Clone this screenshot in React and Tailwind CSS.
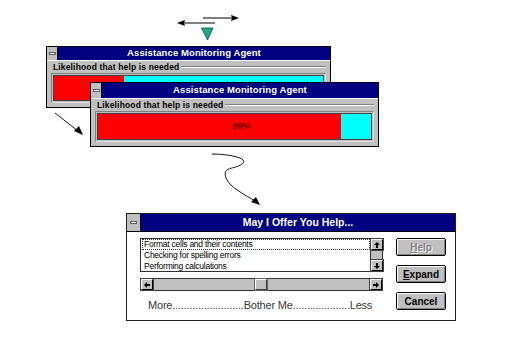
import React from "react";

const F = { fontFamily: '"Liberation Sans", Arial, sans-serif' };

function SysBox({ w = 11 }) {
  return (
    <div className={`h-full bg-[#c0c0c0] border-r border-black flex items-center justify-center shrink-0`} style={{ width: w }}>
      <div className="w-[7px] h-[3px] bg-white border border-[#606060]" />
    </div>
  );
}

function AgentWindow({ className, pct, label, titleH }) {
  return (
    <div className={`absolute border border-black bg-[#c0c0c0] flex flex-col ${className}`}>
      <div className="flex shrink-0" style={{ height: titleH }}>
        <SysBox />
        <div className="flex-1 bg-[#000080] text-white font-bold text-[9.5px] flex items-center justify-center tracking-[0.1px]">
          Assistance Monitoring Agent
        </div>
      </div>
      <div className="flex-1 flex flex-col border-t border-white px-[4px] pb-[4px]">
        <div className="flex items-center h-[10px] mt-[1px]">
          <span className="text-[8.5px] font-bold text-black leading-none pl-[2px] pr-[2px] tracking-[0.15px]">Likelihood that help is needed</span>
          <div className="flex-1 border-t border-[#808080] border-b border-b-white h-[2px]" />
        </div>
        <div className="flex-1 border border-[#e0e0e0] border-t-[#808080] border-l-[#808080] p-[1px] mt-[1px]">
          <div className="h-full flex border border-[#404040] relative">
            <div className="bg-[#ff0000] h-full" style={{ width: pct + "%" }} />
            <div className="bg-[#00ffff] h-full flex-1" />
            {label && (
              <div className="absolute inset-0 flex items-center justify-center text-[9px] font-bold text-[#700000] pl-[14px]">
                {label}
              </div>
            )}
          </div>
        </div>
      </div>
    </div>
  );
}

function ArrowBox({ dir, className = "" }) {
  return (
    <div className={`w-[12px] h-[11px] bg-[#c0c0c0] border border-black border-t-white border-l-white outline outline-1 outline-[#404040] flex items-center justify-center shrink-0 ${className}`}>
      <svg width="8" height="8" viewBox="0 0 8 8">
        {dir === "up" && <><polygon points="4,1 7,4 1,4" fill="#000" /><rect x="3" y="4" width="2" height="3" fill="#000" /></>}
        {dir === "down" && <><polygon points="1,4 7,4 4,7" fill="#000" /><rect x="3" y="1" width="2" height="3" fill="#000" /></>}
        {dir === "left" && <><polygon points="1,4 4,1 4,7" fill="#000" /><rect x="4" y="3" width="3" height="2" fill="#000" /></>}
        {dir === "right" && <><polygon points="7,4 4,1 4,7" fill="#000" /><rect x="1" y="3" width="3" height="2" fill="#000" /></>}
      </svg>
    </div>
  );
}

function Btn({ children, disabled }) {
  return (
    <div className="w-[50px] h-[18px] border border-black rounded-[2px] bg-[#c0c0c0] p-0">
      <div className={`w-full h-full border-[1.5px] border-white border-r-[#808080] border-b-[#808080] flex items-center justify-center text-[10px] font-bold ${disabled ? "text-[#808080] [text-shadow:1px_1px_0_#fff]" : "text-black"}`}>
        {children}
      </div>
    </div>
  );
}

export default function App() {
  return (
    <div className="relative w-[518px] h-[360px] bg-white overflow-hidden" style={F}>
      <svg className="absolute inset-0" width="518" height="360" viewBox="0 0 518 360">
        <line x1="203" y1="18" x2="233" y2="18" stroke="#000" strokeWidth="1" />
        <polygon points="239,18 231,15 232,18 231,21" fill="#000" />
        <line x1="184" y1="23" x2="215" y2="23" stroke="#000" strokeWidth="1" />
        <polygon points="177,23 185,20 184,23 185,26" fill="#000" />
        <polygon points="201.5,28 213,28 207.5,40" fill="#22a888" stroke="#0a5040" strokeWidth="0.8" />
        <line x1="55" y1="113" x2="78" y2="131" stroke="#000" strokeWidth="0.9" />
        <polygon points="83,135 74,131 79,126" fill="#000" />
        <path d="M212,154 C228,154 250,158 242,164 C234,170 222,166 226,178 C230,188 246,195 255,201" fill="none" stroke="#000" strokeWidth="0.9" />
        <polygon points="260,205 251,202 256,197" fill="#000" />
      </svg>

      <AgentWindow className="left-[46px] top-[46px] w-[285px] h-[62px]" pct={26} titleH={13} />
      <AgentWindow className="left-[90px] top-[82px] w-[289px] h-[65px]" pct={89} label="89%" titleH={15} />

      <div className="absolute left-[126px] top-[213px] w-[330px] h-[108px] border border-[#202020] bg-white flex flex-col">
        <div className="flex h-[18px] shrink-0 border-b border-black">
          <SysBox w={14} />
          <div className="flex-1 bg-[#000080] text-white font-bold text-[10.5px] flex items-center justify-center">
            May I Offer You Help...
          </div>
        </div>
        <div className="flex flex-1 pl-[13px] pr-[9px] pt-[6px]">
          <div className="flex flex-col w-[243px]">
            <div className="h-[34px] border border-[#303030] flex">
              <div className="flex-1 flex flex-col text-[8.5px] leading-[11px] text-black pl-[1px] tracking-[-0.25px]">
                <div className="border border-dotted border-[#404040] pl-[1px] h-[11px] leading-[9px]">Format cells and their contents</div>
                <div className="pl-[2px]">Checking for spelling errors</div>
                <div className="pl-[2px] leading-[10px]">Performing calculations</div>
              </div>
              <div className="w-[12px] flex flex-col bg-[#c0c0c0] border-l border-[#303030]">
                <ArrowBox dir="up" />
                <div className="flex-1" />
                <ArrowBox dir="down" />
              </div>
            </div>
            <div className="mt-[6px] h-[13px] border border-[#303030] flex bg-[#c0c0c0]">
              <ArrowBox dir="left" className="h-full" />
              <div className="flex-1 flex items-stretch pl-[102px]">
                <div className="w-[12px] bg-[#c0c0c0] border border-white border-r-[#404040] border-b-[#404040] outline outline-1 outline-[#606060]" />
              </div>
              <ArrowBox dir="right" className="h-full" />
            </div>
            <div className="mt-[9px] pl-[8px] text-[11px] text-[#383838] leading-none whitespace-nowrap tracking-[-0.2px]">
              More.........................Bother Me....................Less
            </div>
          </div>
          <div className="ml-[13px] flex flex-col gap-[9px]">
            <Btn disabled><span className="underline">H</span>elp</Btn>
            <Btn><span className="underline">E</span>xpand</Btn>
            <Btn>Cancel</Btn>
          </div>
        </div>
      </div>
    </div>
  );
}
